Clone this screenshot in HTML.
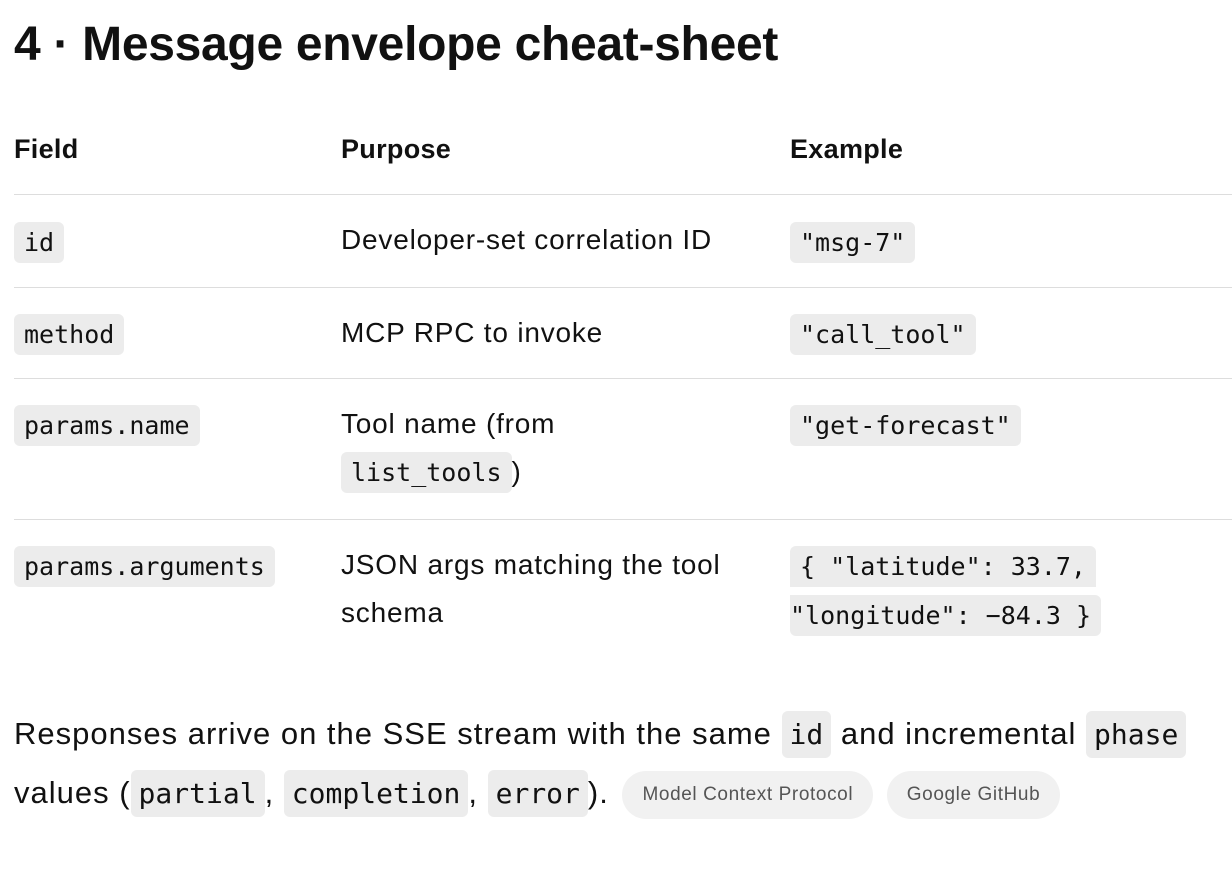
<!DOCTYPE html>
<html><head><meta charset="utf-8"><style>
body{margin:0;background:#fff;color:#111;font-family:"Liberation Sans",sans-serif;width:1232px;height:870px;overflow:hidden;position:relative}
.a{position:absolute;white-space:nowrap}
h1{position:absolute;left:14px;top:14px;margin:0;font-size:48px;font-weight:bold;letter-spacing:-0.3px;line-height:62px}
.th{font-weight:bold;font-size:27px;letter-spacing:0.3px}
.t{font-size:28px;line-height:48px;letter-spacing:0.8px}
code{font-family:"DejaVu Sans Mono",monospace;font-size:25px;letter-spacing:0;background:#ececec;border-radius:6px;padding:6px 10px}
.p code{font-size:28px;padding:7px 8px}
.hr{position:absolute;left:14px;right:0;height:1px;background:#ddd}
.p{font-size:31px;line-height:58px;letter-spacing:1px}
.pill{display:inline-block;background:#f1f1f1;color:#555;font-size:19px;letter-spacing:0.6px;border-radius:25px;padding:0 20px;height:48px;line-height:48px;vertical-align:middle;margin-left:4px}
</style></head><body>
<h1>4 · Message envelope cheat-sheet</h1>
<div class="a th" style="left:14px;top:134px">Field</div>
<div class="a th" style="left:341px;top:134px">Purpose</div>
<div class="a th" style="left:790px;top:134px">Example</div>
<div class="hr" style="top:194px"></div>
<div class="a t" style="left:14px;top:218px"><code>id</code></div>
<div class="a t" style="left:341px;top:216px">Developer-set correlation ID</div>
<div class="a t" style="left:790px;top:218px"><code>"msg-7"</code></div>
<div class="hr" style="top:287px"></div>
<div class="a t" style="left:14px;top:310px"><code>method</code></div>
<div class="a t" style="left:341px;top:309px">MCP RPC to invoke</div>
<div class="a t" style="left:790px;top:310px"><code>"call_tool"</code></div>
<div class="hr" style="top:378px"></div>
<div class="a t" style="left:14px;top:401px"><code>params.name</code></div>
<div class="a t" style="left:341px;top:400px">Tool name (from<br><code>list_tools</code>)</div>
<div class="a t" style="left:790px;top:401px"><code>"get-forecast"</code></div>
<div class="hr" style="top:519px"></div>
<div class="a t" style="left:14px;top:542px"><code>params.arguments</code></div>
<div class="a t" style="left:341px;top:541px">JSON args matching the tool<br>schema</div>
<div class="a t" style="left:790px;top:542px;line-height:48px"><code style="border-radius:6px 6px 0 0">{ "latitude": 33.7,</code><br><code style="padding-left:0;border-radius:0 6px 6px 6px">"longitude": −84.3 }</code></div>
<div class="a p" style="left:14px;top:705px">Responses arrive on the SSE stream with the same <code>id</code> and incremental <code>phase</code><br>values (<code>partial</code>, <code>completion</code>, <code>error</code>). <span class="pill">Model Context Protocol</span> <span class="pill">Google GitHub</span></div>
</body></html>
